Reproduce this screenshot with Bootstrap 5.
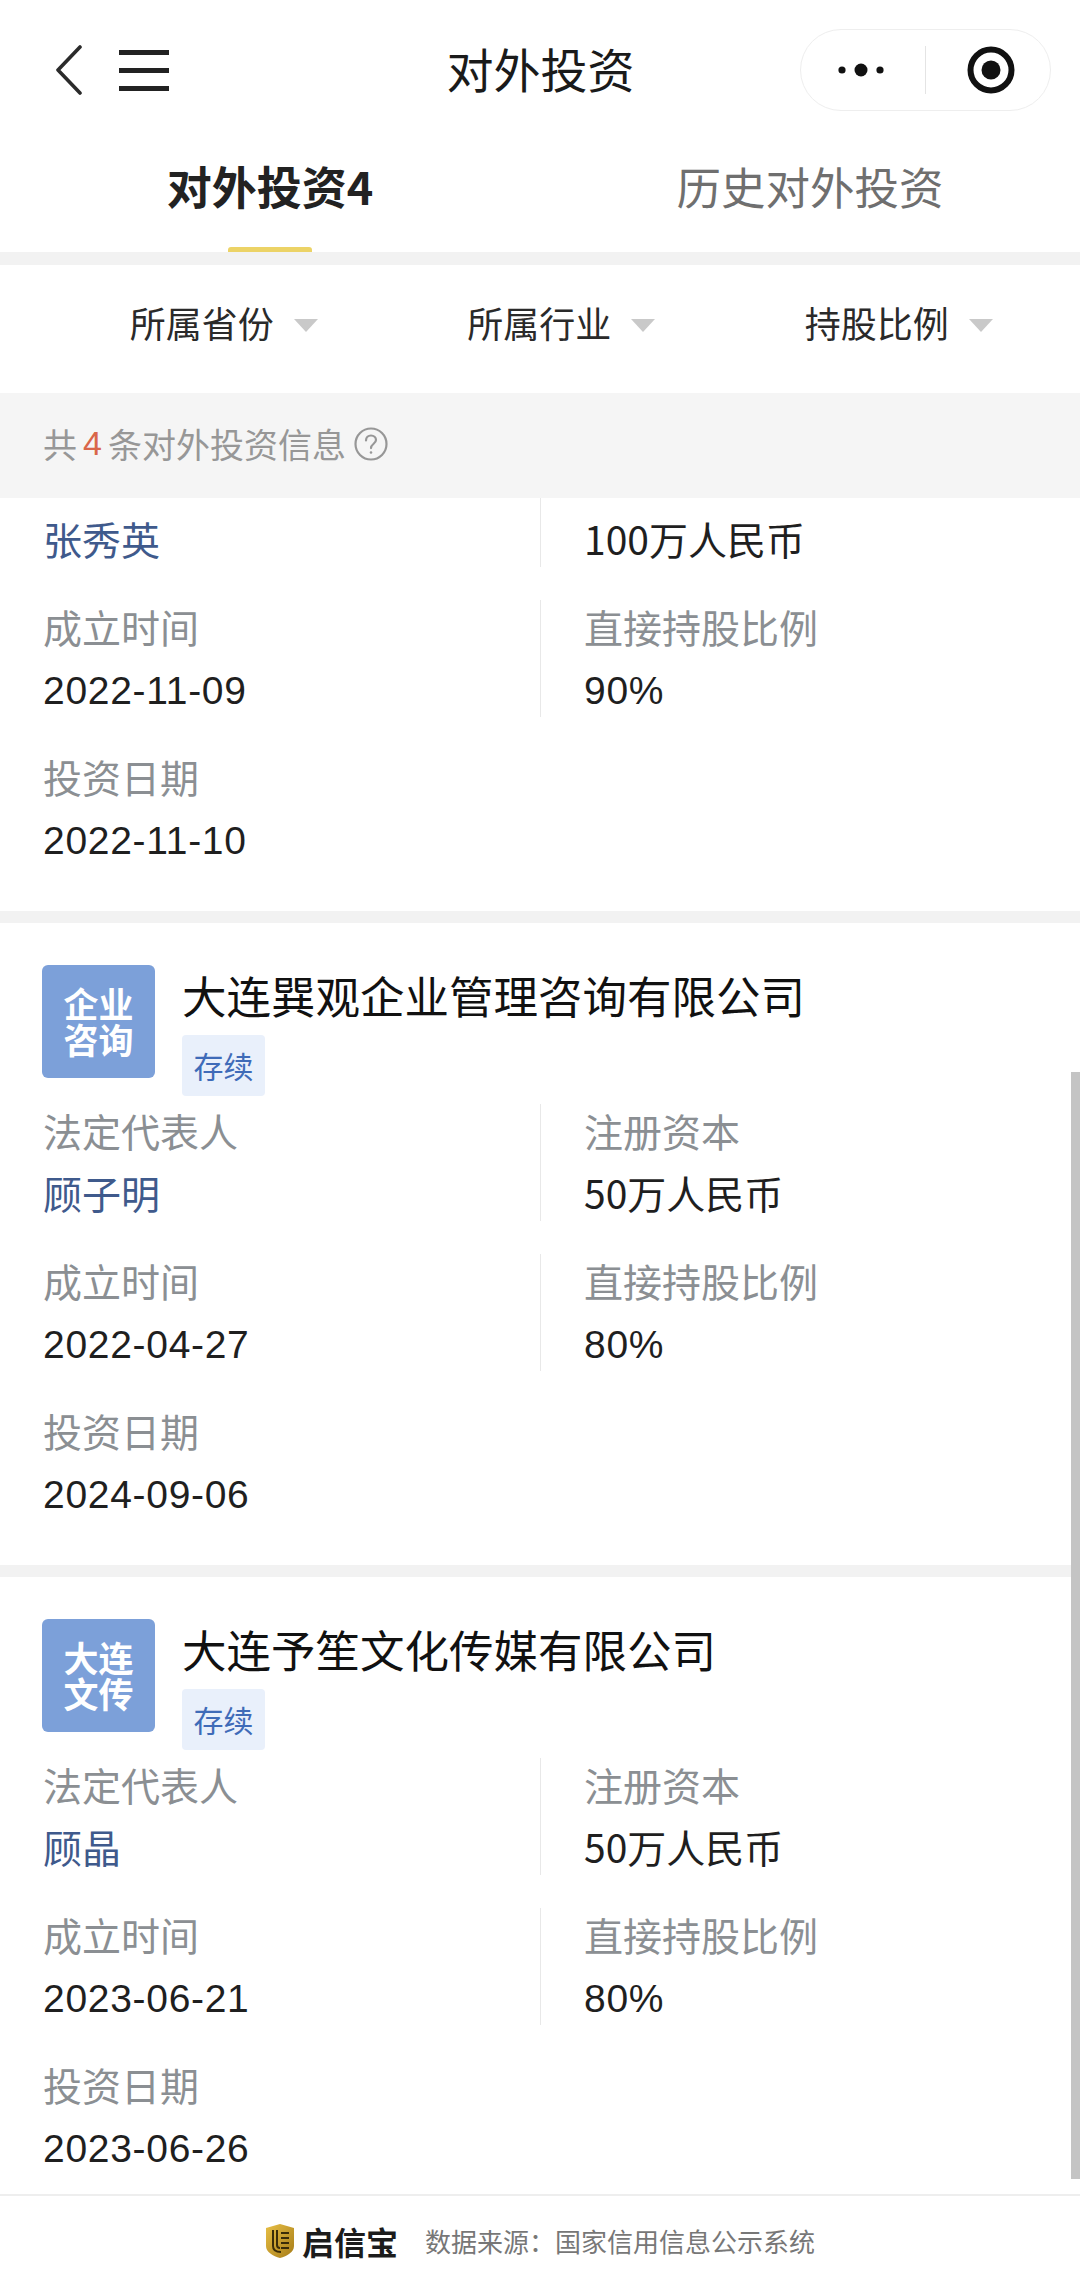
<!DOCTYPE html>
<html lang="zh-CN">
  <head>
    <meta charset="UTF-8" />
    <meta name="viewport" content="width=device-width, initial-scale=1.0" />
    <title>对外投资</title>
    <link
      rel="stylesheet"
      href="https://cdn.jsdelivr.net/npm/bootstrap@5.3.3/dist/css/bootstrap.min.css"
    />
    <script src="https://cdn.jsdelivr.net/npm/bootstrap@5.3.3/dist/js/bootstrap.bundle.min.js"></script>
    <style>
      html, body { height: 2285px; overflow: hidden; }
      body {
        position: relative;
        background: #fff;
        color: #1f1f1f;
        font-family: "Noto Sans CJK SC", "Liberation Sans", sans-serif;
      }
      .topbar {
        display: grid;
        grid-template-columns: 1fr auto 1fr;
        align-items: center;
        height: 82px;
        margin-top: 29px;
        padding: 0 29px 0 30px;
      }
      .topbar-left { gap: 36px; padding-left: 25px; }
      .page-title { font-size: 47px; line-height: 78px; height: 82px; color: #1a1a1a; }
      .capsule {
        width: 251px;
        height: 82px;
        border: 1.5px solid #eeeeee;
        border-radius: 41px;
      }
      .capsule-half { height: 100%; }
      .capsule-more { width: 124px; padding-right: 5px; }
      .capsule-scan { padding-left: 5px; }
      .capsule-sep { width: 1px; height: 48px; background: #e4e4e4; }
      .tab-title { padding-top: 45px; height: 108px; font-size: 44.5px; line-height: 60px; text-align: center; color: #6f6f6f; }
      .tab-title.on { font-size: 45px; font-weight: 700; color: #222; }
      .tab-mark { width: 84px; height: 5px; margin: 28px auto 0; background: #ecd366; border-radius: 3px 3px 0 0; }
      .band { height: 13px; background: #f2f2f2; }
      .filters { height: 128px; padding: 27px 11px 0 55px; }
      .filter-item { width: 337.5px; font-size: 36px; line-height: 60px; color: #2a2a2a; gap: 20px; }
      .caret-down {
        width: 0; height: 0;
        border-left: 12px solid transparent;
        border-right: 12px solid transparent;
        border-top: 13px solid #c9c9c9;
        margin-top: 6px;
      }
      .count-bar {
        height: 105px;
        padding: 0 0 4px 43px;
        background: #f5f5f5;
        color: #979797;
        font-size: 34px;
      }
      .count-num { color: #d9664a; margin: 0 6px; font-family: "Liberation Sans", sans-serif; }
      .pane { height: 1696px; overflow: hidden; }
      .first-card { margin-top: -93px; }
      .item { padding: 42px 0 44px; }
      .item-band { height: 12px; background: #f2f2f2; }
      .item-head { height: 131px; margin-bottom: 5px; padding-left: 42px; gap: 27px; }
      .item-logo {
        width: 113px;
        height: 113px;
        border-radius: 6px;
        background: #7ca0d9;
        color: #fff;
        font-size: 35px;
        font-weight: 700;
        line-height: 36px;
        text-align: center;
        padding-top: 20px;
      }
      .item-name { font-size: 44.5px; line-height: 60px; color: #111; }
      .item-tag {
        width: 83px;
        height: 61px;
        margin-top: 10px;
        border-radius: 4px;
        background: #e9f0fb;
        color: #3f6bb8;
        font-size: 30px;
        line-height: 61px;
        text-align: center;
      }
      .info-row { height: 120px; margin-bottom: 30px; }
      .info-row:last-child { margin-bottom: 0; }
      .info-left { width: 540px; padding-left: 43px; }
      .info-right { margin-top: 3px; padding-left: 43px; border-left: 1.5px solid #e8e8e8; height: 117px; }
      .info-right .info-label { margin-top: -3px; }
      .info-label { font-size: 39px; line-height: 58px; color: #8b8f93; }
      .info-value { font-size: 39px; line-height: 58px; margin-top: 4px; }
      .num-value { font-family: "Liberation Sans", sans-serif; letter-spacing: 0.7px; margin-top: 7px; }
      .person { color: #3f5a8c; }
      .foot {
        height: 91px;
        border-top: 2px solid #eeeeee;
        padding-left: 265px;
      }
      .foot-brand { font-size: 32px; font-weight: 700; color: #1c1c1c; margin: 0 27px 0 7px; line-height: 1; }
      .foot-source { font-size: 26px; color: #777; }
      .scroll-thumb {
        position: absolute;
        right: 0;
        top: 1072px;
        width: 9px;
        height: 1107px;
        background: #c4c4c4;
      }
    </style>
  </head>
  <body>
    <header>
      <div class="topbar">
        <div class="topbar-left d-flex align-items-center">
          <svg width="28" height="50" viewBox="0 0 28 50" fill="none" stroke="#2b2b2b" stroke-width="3.6" stroke-linecap="round" stroke-linejoin="round"><path d="M25 2 3 25l22 23"/></svg>
          <svg width="50" height="41" viewBox="0 0 50 41" fill="#222"><rect y="0" width="50" height="5"/><rect y="18" width="50" height="5"/><rect y="36" width="50" height="5"/></svg>
        </div>
        <div class="page-title">对外投资</div>
        <div class="d-flex justify-content-end">
          <div class="capsule d-flex align-items-center">
            <div class="capsule-half capsule-more d-flex align-items-center justify-content-center">
              <svg width="46" height="14" viewBox="0 0 46 14" fill="#111"><circle cx="4" cy="7" r="3.6"/><circle cx="23" cy="7" r="6.5"/><circle cx="42" cy="7" r="3.6"/></svg>
            </div>
            <div class="capsule-sep"></div>
            <div class="capsule-half capsule-scan flex-fill d-flex align-items-center justify-content-center">
              <svg width="48" height="48" viewBox="0 0 48 48" fill="none"><circle cx="24" cy="24" r="20.5" stroke="#111" stroke-width="6"/><circle cx="24" cy="24" r="9.5" fill="#111"/></svg>
            </div>
          </div>
        </div>
      </div>
      <div class="row g-0">
        <div class="col-6">
          <div class="tab-title on">对外投资4</div>
          <div class="tab-mark"></div>
        </div>
        <div class="col-6">
          <div class="tab-title">历史对外投资</div>
        </div>
      </div>
    </header>
    <div class="band"></div>

    <div class="filters d-flex align-items-start">
      <div class="filter-item d-flex align-items-center justify-content-center">所属省份<span class="caret-down"></span></div>
      <div class="filter-item d-flex align-items-center justify-content-center">所属行业<span class="caret-down"></span></div>
      <div class="filter-item d-flex align-items-center justify-content-center">持股比例<span class="caret-down"></span></div>
    </div>

    <div class="count-bar d-flex align-items-center">
      共<span class="count-num">4</span>条对外投资信息
      <svg class="ms-2" width="34" height="34" viewBox="0 0 34 34" fill="none" stroke="#979797" stroke-width="2.2"><circle cx="17" cy="17" r="15.5"/><path d="M12 13.5c0-3 2.2-5 5-5s5 2 5 4.6c0 3.6-5 3.8-5 8" stroke-linecap="round"/><circle cx="17" cy="25.5" r="1.3" fill="#979797" stroke="none"/></svg>
    </div>

    <div class="pane" id="pane"></div>

    <footer class="foot d-flex align-items-center">
      <svg width="30" height="36" viewBox="0 0 30 36"><defs><linearGradient id="gold" x1="0" y1="0" x2="1" y2="1"><stop offset="0" stop-color="#e8bf45"/><stop offset="1" stop-color="#a67c18"/></linearGradient></defs><path d="M1 5 15 1l14 4v18c0 6-7 10-14 12C8 33 1 29 1 23z" fill="url(#gold)"/><path d="M8 7v16c0 4 3 6 8 6M12 7v15c0 2 1 3 3 3M16 10h8M16 15h8M16 20h8M16 25h8" fill="none" stroke="#3a2c08" stroke-width="2"/></svg>
      <span class="foot-brand">启信宝</span>
      <span class="foot-source">数据来源：国家信用信息公示系统</span>
    </footer>

    <div class="scroll-thumb"></div>

    <script>
      const items = [
        { person: "张秀英", capital: "100万人民币", founded: "2022-11-09", share: "90%", date: "2022-11-10" },
        { logo: ["企业", "咨询"], name: "大连巽观企业管理咨询有限公司", person: "顾子明", capital: "50万人民币", founded: "2022-04-27", share: "80%", date: "2024-09-06" },
        { logo: ["大连", "文传"], name: "大连予笙文化传媒有限公司", person: "顾晶", capital: "50万人民币", founded: "2023-06-21", share: "80%", date: "2023-06-26" },
      ];

      const pane = document.querySelector("#pane");

      function infoCell(label, value, valueClass) {
        return `<div class="info-label">${label}</div><div class="info-value ${valueClass}">${value}</div>`;
      }

      let html = "";
      for (let i = 0; i < items.length; i++) {
        const it = items[i];
        let head = "";
        if (it.logo) {
          head = `<div class="item-head d-flex">
              <div class="item-logo">${it.logo[0]}<br />${it.logo[1]}</div>
              <div>
                <div class="item-name">${it.name}</div>
                <div class="item-tag">存续</div>
              </div>
            </div>`;
        }
        html += `<div class="item ${it.logo ? "" : "first-card"}">
            ${head}
            <div class="info-row d-flex">
              <div class="info-left">${infoCell("法定代表人", it.person, "person")}</div>
              <div class="info-right">${infoCell("注册资本", it.capital, "")}</div>
            </div>
            <div class="info-row d-flex">
              <div class="info-left">${infoCell("成立时间", it.founded, "num-value")}</div>
              <div class="info-right">${infoCell("直接持股比例", it.share, "num-value")}</div>
            </div>
            <div class="info-row d-flex">
              <div class="info-left">${infoCell("投资日期", it.date, "num-value")}</div>
            </div>
          </div>`;
        if (i < items.length - 1) {
          html += `<div class="item-band"></div>`;
        }
      }
      pane.innerHTML = html;
    </script>
  </body>
</html>
